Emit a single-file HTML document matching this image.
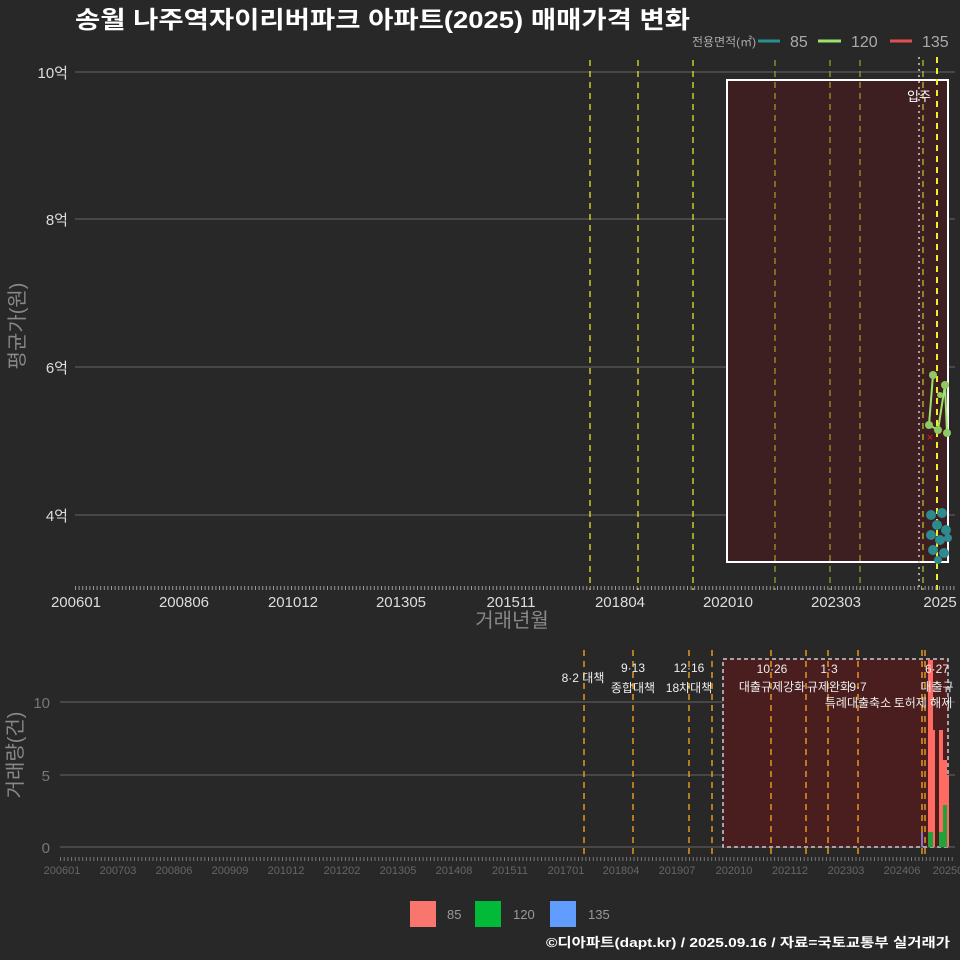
<!DOCTYPE html>
<html><head><meta charset="utf-8"><style>
body{margin:0;background:#282828;}
svg{display:block;font-family:"Liberation Sans","Noto Sans CJK KR",sans-serif;}
</style></head><body>
<svg width="960" height="960" viewBox="0 0 960 960">
<rect width="960" height="960" fill="#282828"/>
<text x="75" y="28" font-size="24" font-weight="bold" fill="#fff" textLength="615" lengthAdjust="spacingAndGlyphs">송월 나주역자이리버파크 아파트(2025) 매매가격 변화</text>
<!-- legend top -->
<text x="692" y="46" font-size="12" fill="#aaa">전용면적(㎡)</text>
<line x1="758" y1="41" x2="780" y2="41" stroke="#2a8f8f" stroke-width="3"/>
<text x="790" y="47" font-size="16" fill="#aaa">85</text>
<line x1="818" y1="41" x2="841" y2="41" stroke="#9be36b" stroke-width="3"/>
<text x="851" y="47" font-size="16" fill="#aaa">120</text>
<line x1="890" y1="41" x2="912" y2="41" stroke="#e05050" stroke-width="3"/>
<text x="922" y="47" font-size="16" fill="#aaa">135</text>
<!-- top plot -->
<g stroke="#666" stroke-width="1">
<line x1="75" y1="72" x2="955" y2="72"/><line x1="75" y1="219" x2="955" y2="219"/>
<line x1="75" y1="367" x2="955" y2="367"/><line x1="75" y1="515" x2="955" y2="515"/>
</g>
<g font-size="15" fill="#ddd" text-anchor="end">
<text x="68" y="78">10억</text><text x="68" y="225">8억</text><text x="68" y="373">6억</text><text x="68" y="521">4억</text>
</g>
<text transform="translate(24,326) rotate(-90)" font-size="20" fill="#888" text-anchor="middle">평균가(원)</text>
<rect x="727" y="80" width="221" height="482" fill="#3d1f22" stroke="#fff" stroke-width="2"/>
<g stroke-dasharray="6,5" stroke-width="1.3">
<line x1="590" y1="60" x2="590" y2="590" stroke="#e5e52a"/>
<line x1="638" y1="60" x2="638" y2="590" stroke="#e5e52a"/>
<line x1="693" y1="60" x2="693" y2="590" stroke="#e5e52a"/>
<line x1="775" y1="60" x2="775" y2="590" stroke="#9a9a2a"/>
<line x1="830" y1="60" x2="830" y2="590" stroke="#9a9a2a"/>
<line x1="860" y1="60" x2="860" y2="590" stroke="#9a9a2a"/>
<line x1="923" y1="60" x2="923" y2="590" stroke="#bcbc2a"/>
<line x1="937" y1="57" x2="937" y2="590" stroke="#f0f02a" stroke-width="2"/>
</g>
<line x1="919" y1="57" x2="919" y2="590" stroke="#ccc" stroke-dasharray="2,4" stroke-width="1.5"/>
<text x="919" y="101" font-size="13" fill="#fff" text-anchor="middle">입주</text>
<polyline points="933,375 929,425 938,430 945,385 947,433" fill="none" stroke="#9be36b" stroke-width="2"/>
<g fill="#8fc963"><circle cx="933" cy="375" r="4"/><circle cx="929" cy="425" r="4"/><circle cx="938" cy="430" r="4"/><circle cx="945" cy="385" r="4"/><circle cx="947" cy="433" r="4"/><circle cx="940" cy="395" r="3"/></g>
<text x="930" y="441" font-size="11" fill="#e02020" text-anchor="middle">×</text>
<g fill="#2d8a8f">
<circle cx="931" cy="515" r="5"/><circle cx="942" cy="513" r="5"/><circle cx="937" cy="525" r="5"/><circle cx="946" cy="530" r="5"/><circle cx="931" cy="535" r="5"/><circle cx="940" cy="540" r="5"/><circle cx="933" cy="550" r="5"/><circle cx="944" cy="553" r="5"/><circle cx="938" cy="560" r="4"/><circle cx="948" cy="538" r="4"/>
</g>
<line x1="75" y1="588" x2="955" y2="588" stroke="#999" stroke-width="4" stroke-dasharray="1,2.6"/>
<g font-size="15" fill="#ddd" text-anchor="middle">
<text x="76" y="607">200601</text><text x="184" y="607">200806</text><text x="293" y="607">201012</text><text x="401" y="607">201305</text><text x="511" y="607">201511</text><text x="620" y="607">201804</text><text x="728" y="607">202010</text><text x="836" y="607">202303</text><text x="940" y="607">2025</text>
</g>
<text x="512" y="627" font-size="20" fill="#888" text-anchor="middle">거래년월</text>
<!-- bottom plot -->
<g stroke="#666"><line x1="60" y1="702" x2="955" y2="702"/><line x1="60" y1="775" x2="955" y2="775"/><line x1="60" y1="847" x2="955" y2="847"/></g>
<g font-size="15" fill="#777" text-anchor="end"><text x="50" y="708">10</text><text x="50" y="781">5</text><text x="50" y="853">0</text></g>
<text transform="translate(22,755) rotate(-90)" font-size="20" fill="#888" text-anchor="middle">거래량(건)</text>
<rect x="723" y="659" width="225" height="188" fill="#4a1e1f" stroke="#ccc" stroke-width="1.5" stroke-dasharray="4,3"/>
<g stroke="#f0a020" stroke-dasharray="6,5" stroke-width="1.4">
<line x1="584" y1="650" x2="584" y2="858"/><line x1="633" y1="650" x2="633" y2="858"/><line x1="689" y1="650" x2="689" y2="858"/><line x1="712" y1="650" x2="712" y2="858"/>
<line x1="771" y1="650" x2="771" y2="858"/><line x1="806" y1="650" x2="806" y2="858"/><line x1="828" y1="650" x2="828" y2="858"/><line x1="858" y1="650" x2="858" y2="858"/><line x1="922" y1="650" x2="922" y2="858"/><line x1="925" y1="650" x2="925" y2="858"/>
</g>
<g fill="#ff6b63"><rect x="928" y="660" width="5" height="187"/><rect x="932" y="730" width="3" height="117"/><rect x="939" y="730" width="4" height="117"/><rect x="943" y="760" width="4" height="87"/><rect x="947" y="775" width="2" height="72"/></g>
<g fill="#22a33a"><rect x="928" y="832" width="5" height="15"/><rect x="939" y="832" width="8" height="15"/><rect x="943" y="805" width="4" height="42"/></g>
<rect x="921" y="832" width="2" height="15" fill="#8870d0"/>
<g font-size="12" fill="#eee" text-anchor="middle">
<text x="583" y="682">8·2 대책</text><text x="633" y="672">9·13</text><text x="633" y="692">종합대책</text>
<text x="689" y="672">12·16</text><text x="689" y="692">18차대책</text>
<text x="772" y="673">10·26</text><text x="772" y="691">대출규제강화</text><text x="829" y="673">1·3</text><text x="829" y="691">규제완화</text><text x="858" y="691">9·7</text><text x="858" y="707">특례대출축소</text><text x="923" y="707">토허제 해제</text>
<text x="937" y="673">6·27</text><text x="937" y="691">대출규</text>
</g>
<line x1="60" y1="859" x2="955" y2="859" stroke="#777" stroke-width="4" stroke-dasharray="1,2.7"/>
<g font-size="11" fill="#666" text-anchor="middle">
<text x="62" y="874">200601</text><text x="118" y="874">200703</text><text x="174" y="874">200806</text><text x="230" y="874">200909</text><text x="286" y="874">201012</text><text x="342" y="874">201202</text><text x="398" y="874">201305</text><text x="454" y="874">201408</text><text x="510" y="874">201511</text><text x="566" y="874">201701</text><text x="621" y="874">201804</text><text x="677" y="874">201907</text><text x="734" y="874">202010</text><text x="790" y="874">202112</text><text x="846" y="874">202303</text><text x="902" y="874">202406</text><text x="948" y="874">20250</text>
</g>
<!-- bottom legend -->
<rect x="410" y="901" width="26" height="26" fill="#f8766d"/><text x="447" y="919" font-size="13" fill="#999">85</text>
<rect x="475" y="901" width="26" height="26" fill="#00ba38"/><text x="513" y="919" font-size="13" fill="#999">120</text>
<rect x="550" y="901" width="26" height="26" fill="#619cff"/><text x="588" y="919" font-size="13" fill="#999">135</text>
<text x="546" y="947" font-size="13" font-weight="bold" fill="#fff" textLength="404" lengthAdjust="spacingAndGlyphs">©디아파트(dapt.kr) / 2025.09.16 / 자료=국토교통부 실거래가</text>
</svg>
</body></html>
